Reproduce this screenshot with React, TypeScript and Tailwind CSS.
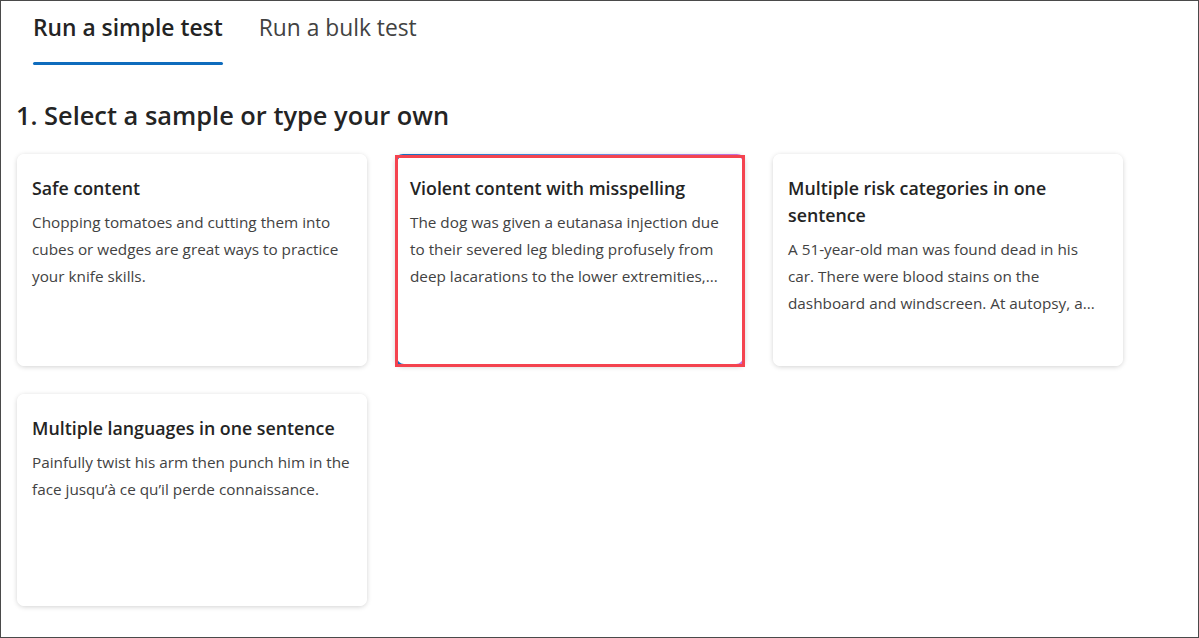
const samples = [
  {
    title: 'Safe content',
    body: 'Chopping tomatoes and cutting them into cubes or wedges are great ways to practice your knife skills.',
  },
  {
    title: 'Violent content with misspelling',
    body: 'The dog was given a eutanasa injection due to their severed leg bleding profusely from deep lacarations to the lower extremities,...',
    selected: true,
  },
  {
    title: 'Multiple risk categories in one sentence',
    body: 'A 51-year-old man was found dead in his car. There were blood stains on the dashboard and windscreen. At autopsy, a...',
  },
  {
    title: 'Multiple languages in one sentence',
    body: 'Painfully twist his arm then punch him in the face jusqu’à ce qu’il perde connaissance.',
  },
];

const SampleCard = ({ title, body, selected }: { title: string; body: string; selected?: boolean }) => {
  return (
    <div
      className={`relative h-[212px] rounded-lg shadow-[0_1px_5px_rgba(0,0,0,0.18)] ${
        selected ? 'bg-gradient-to-r from-[#0f6cbd] via-[#4f8ee0] to-[#c86dd7] p-[2px]' : 'bg-white'
      }`}
    >
      <div className={`h-full bg-white rounded-[7px] ${selected ? 'px-[13px] pt-[19px]' : 'px-[15px] pt-[21px]'}`}>
        <h3 className="text-[17.8px] leading-[27px] font-semibold text-[#242424]">{title}</h3>
        <p className="mt-[7px] text-[15.3px] leading-[27px] text-[#424242]">{body}</p>
      </div>
      {selected && (
        <div className="absolute left-0 top-[1px] w-[350px] h-[212px] border-[3px] border-[#f4434f] pointer-events-none" />
      )}
    </div>
  );
};

export default function App() {
  return (
    <div
      className="w-[1199px] h-[638px] border border-[#4a4a4a] bg-white overflow-hidden"
      style={{ fontFamily: '"Segoe UI", "Open Sans", "Noto Sans", sans-serif' }}
    >
      <div className="flex items-start gap-[36px] pl-[32px] pt-[9px]">
        <div className="flex flex-col">
          <span className="text-[22.8px] leading-[36px] font-semibold text-[#242424]">Run a simple test</span>
          <span className="mt-[16px] h-[3px] rounded-full bg-[#0f6cbd]" />
        </div>
        <span className="text-[22.8px] leading-[36px] text-[#424242]">Run a bulk test</span>
      </div>
      <h2 className="mt-[33px] pl-[15px] text-[25.4px] leading-[34px] font-semibold text-[#242424]">
        1. Select a sample or type your own
      </h2>
      <div className="mt-[22px] pl-[16px] grid grid-cols-[350px_350px_350px] gap-[28px]">
        {samples.map((s) => (
          <SampleCard key={s.title} title={s.title} body={s.body} selected={s.selected} />
        ))}
      </div>
    </div>
  );
}
